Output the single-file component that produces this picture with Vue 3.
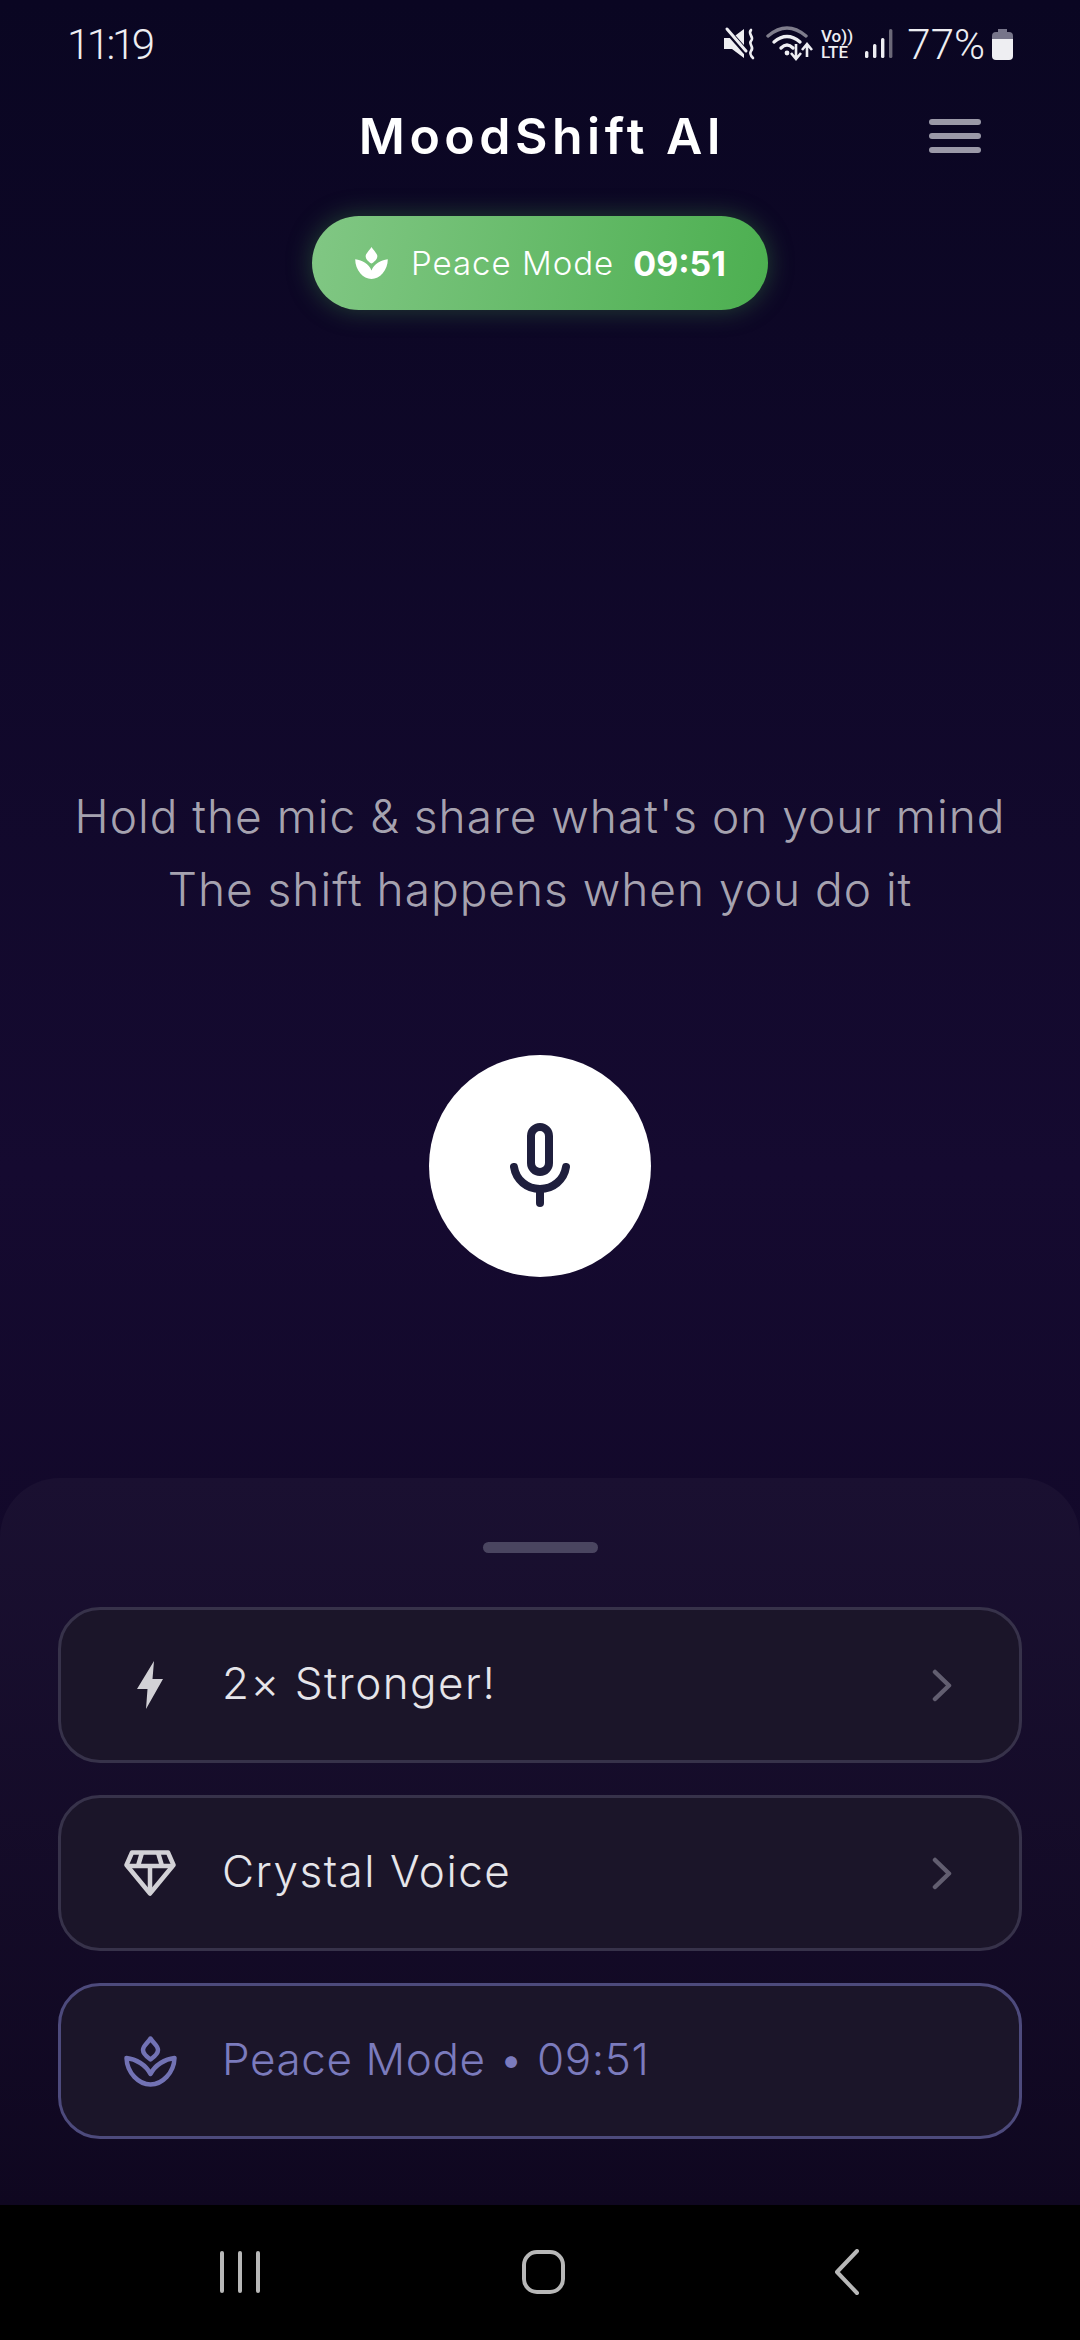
<template>
  <div class="screen">
    <div class="status-bar">
      <span class="clock">11:19</span>
      <div class="status-right">
        <svg class="status-icons" width="170" height="36" viewBox="0 0 170 36">
          <path d="M0 12H8L20 3V32L8 23H0Z" fill="#eeeef2" />
          <path d="M1 2L23 27" stroke="#0b0724" stroke-width="6" />
          <path d="M3 3L22 25" stroke="#eeeef2" stroke-width="3" stroke-linecap="round" />
          <path d="M27 4C23 8 31 11 27 15C24 18 31 21 27 25C25 28 27 30 29 32" fill="none" stroke="#eeeef2" stroke-width="2.6" stroke-linecap="round" />
          <path d="M44 10Q63 -6 82 10" fill="none" stroke="#7f7d8c" stroke-width="3.4" stroke-linecap="round" />
          <path d="M50 16Q63 5 76 16" fill="none" stroke="#eeeef2" stroke-width="3.4" stroke-linecap="round" />
          <path d="M57 22Q63 16 69 22" fill="none" stroke="#eeeef2" stroke-width="3.4" stroke-linecap="round" />
          <circle cx="63" cy="27" r="2.4" fill="#eeeef2" />
          <path d="M72 18V32M67 27L72 33L77 27" fill="none" stroke="#eeeef2" stroke-width="2.6" />
          <path d="M83 31V19M78 24L83 18L88 24" fill="none" stroke="#eeeef2" stroke-width="2.6" />
          <text x="97" y="16" class="net-text">Vo))</text>
          <text x="97" y="32" class="net-text">LTE</text>
          <rect x="141" y="25" width="3.4" height="7" rx="1.5" fill="#eeeef2" />
          <rect x="149" y="18" width="3.4" height="14" rx="1.5" fill="#eeeef2" />
          <rect x="157" y="12" width="3.4" height="20" rx="1.5" fill="#eeeef2" />
          <rect x="165" y="3" width="3.4" height="29" rx="1.5" fill="#6b6878" />
        </svg>
        <span class="battery-pct">77%</span>
        <svg class="battery" width="21" height="31" viewBox="0 0 21 31">
          <path d="M6 0H15V3H17Q21 3 21 7V10H0V7Q0 3 4 3H6Z" fill="#77758a" />
          <path d="M0 10H21V27Q21 31 17 31H4Q0 31 0 27Z" fill="#eeeef2" />
        </svg>
      </div>
    </div>

    <header class="top-bar">
      <span></span>
      <h1 class="title">MoodShift AI</h1>
      <div class="menu-btn">
        <i></i><i></i><i></i>
      </div>
    </header>

    <div class="pill-row">
      <div class="mode-pill">
        <svg width="33" height="32" viewBox="0 0 53 52" fill="#fff">
          <path d="M26.5 0C21 8 17 11 17 15C17 20 22 24 26.5 27C31 24 36 20 36 15C36 11 32 8 26.5 0Z" />
          <path d="M0 20C12 21 22 28 26.5 38C31 28 41 21 53 20C53 38 40 52 26.5 52C13 52 0 38 0 20Z" />
        </svg>
        <span class="pill-label">Peace Mode</span>
        <span class="pill-time">09:51</span>
      </div>
    </div>

    <main class="main">
      <p class="prompt">Hold the mic &amp; share what's on your mind<br />The shift happens when you do it</p>
      <div class="mic-btn">
        <svg width="66" height="90" viewBox="0 0 66 90" fill="none" stroke="#1f1f3d" stroke-width="8" stroke-linecap="round">
          <rect x="24" y="6" width="18" height="45" rx="9" />
          <path d="M7 46C9 59 20 68 33 68C46 68 57 59 59 46" />
          <path d="M33 68V82" />
        </svg>
      </div>
    </main>

    <section class="sheet">
      <div class="handle"></div>
      <div class="options">
        <div v-for="opt in options" :key="opt.label" class="option" :class="{ active: opt.active }">
          <div class="option-icon">
            <svg v-if="opt.icon === 'bolt'" width="26" height="48" viewBox="0 0 26 48" fill="#d2d1d6">
              <path d="M17 0L15.5 18H26L9 48L10.5 28H0Z" />
            </svg>
            <svg v-else-if="opt.icon === 'gem'" width="52" height="47" viewBox="0 0 52 47" fill="none" stroke="#d2d1d6" stroke-width="4.5" stroke-linejoin="round">
              <path d="M8 2.5H44L49.5 15L26 43.5L2.5 15Z" />
              <path d="M2.5 16H49.5M26 16V42M18 2.5L14 16M34 2.5L38 16" />
            </svg>
            <svg v-else width="53" height="52" viewBox="0 0 53 52" fill="none" stroke="#7272b4" stroke-width="4.5" stroke-linejoin="round">
              <path d="M26.5 3.5C23 9 19 11 19 15C19 19 23 22 26.5 24.5C30 22 34 19 34 15C34 11 30 9 26.5 3.5Z" />
              <path d="M2.5 23C12 24 22 30 26.5 39C31 30 41 24 50.5 23C50 38 38 49.5 26.5 49.5C15 49.5 3 38 2.5 23Z" />
            </svg>
          </div>
          <span class="option-label">{{ opt.label }}</span>
          <svg v-if="!opt.active" class="chevron" width="20" height="33" viewBox="0 0 20 33" fill="none" stroke="#625e70" stroke-width="4.5" stroke-linecap="round" stroke-linejoin="round">
            <path d="M3 3L17 16.5L3 30" />
          </svg>
        </div>
      </div>
    </section>

    <nav class="nav-bar">
      <div class="nav-cell">
        <div class="recents"><i></i><i></i><i></i></div>
      </div>
      <div class="nav-cell"><div class="home"></div></div>
      <div class="nav-cell">
        <svg width="25" height="46" viewBox="0 0 25 46" fill="none" stroke="#b8b8b8" stroke-width="4" stroke-linecap="round" stroke-linejoin="round">
          <path d="M23 2L3 23L23 44" />
        </svg>
      </div>
    </nav>
  </div>
</template>

<script setup>
const options = [
  { label: '2× Stronger!', icon: 'bolt' },
  { label: 'Crystal Voice', icon: 'gem' },
  { label: 'Peace Mode • 09:51', icon: 'lotus', active: true }
]
</script>

<style>
html,
body {
  margin: 0;
  background: #000;
}
</style>

<style scoped>
.screen {
  width: 1080px;
  height: 2340px;
  display: flex;
  flex-direction: column;
  overflow: hidden;
  font-family: Inter, "Liberation Sans", sans-serif;
  color: #fff;
  background: linear-gradient(180deg, #0a0622 0%, #150a30 50%, #0e0620 93%);
}

.status-bar {
  height: 72px;
  flex: none;
  display: flex;
  justify-content: space-between;
  align-items: center;
  padding: 16px 67px 0 67px;
  box-sizing: border-box;
  font-family: Roboto, sans-serif;
  font-weight: 300;
  font-size: 42px;
  color: #eeeef2;
}

.clock {
  letter-spacing: -3.5px;
}

.status-right {
  display: flex;
  align-items: center;
}

.status-icons {
  margin-right: 13px;
}

.net-text {
  font-family: Roboto, sans-serif;
  font-size: 17px;
  font-weight: 500;
  fill: #eeeef2;
}

.battery-pct {
  margin-right: 7px;
}

.top-bar {
  height: 128px;
  flex: none;
  display: grid;
  grid-template-columns: 1fr auto 1fr;
  align-items: center;
}

.title {
  margin: 0;
  padding-left: 4px;
  font-size: 50px;
  font-weight: 600;
  letter-spacing: 4.5px;
  color: #fff;
}

.menu-btn {
  justify-self: end;
  margin-right: 99px;
  width: 52px;
  display: flex;
  flex-direction: column;
  gap: 8px;
}

.menu-btn i {
  display: block;
  height: 6px;
  border-radius: 3px;
  background: #9b99a8;
}

.pill-row {
  flex: none;
  display: flex;
  justify-content: center;
  margin-top: 16px;
}

.mode-pill {
  width: 456px;
  height: 94px;
  box-sizing: border-box;
  padding-left: 43px;
  display: flex;
  align-items: center;
  border-radius: 47px;
  background: linear-gradient(100deg, #81c784 0%, #4caf50 100%);
  box-shadow: 0 0 26px rgba(76, 175, 80, 0.35);
}

.pill-label {
  margin-left: 23px;
  font-size: 33px;
  font-weight: 300;
  letter-spacing: 1px;
}

.pill-time {
  margin-left: 19px;
  font-size: 34px;
  font-weight: 700;
}

.main {
  flex: 1;
  display: flex;
  flex-direction: column;
  align-items: center;
  padding-top: 470px;
  min-height: 0;
}

.prompt {
  margin: 0;
  font-size: 46px;
  line-height: 73px;
  font-weight: 300;
  letter-spacing: 1px;
  text-align: center;
  color: rgba(255, 255, 255, 0.65);
}

.mic-btn {
  margin-top: 129px;
  width: 222px;
  height: 222px;
  flex: none;
  display: flex;
  align-items: center;
  justify-content: center;
  border-radius: 50%;
  background: #fff;
}

.sheet {
  height: 727px;
  flex: none;
  box-sizing: border-box;
  padding: 64px 58px 0;
  border-radius: 60px 60px 0 0;
  background: linear-gradient(180deg, #1a1031 0%, #0f0720 100%);
}

.handle {
  width: 115px;
  height: 11px;
  margin: 0 auto 54px;
  border-radius: 6px;
  background: #4a4560;
}

.options {
  display: flex;
  flex-direction: column;
  gap: 32px;
}

.option {
  height: 156px;
  box-sizing: border-box;
  display: flex;
  align-items: center;
  padding: 0 67px 0 61px;
  border: 3px solid #37324a;
  border-radius: 42px;
  background: #1b1529;
}

.option.active {
  border-color: #4d4a7c;
}

.option-icon {
  width: 56px;
  display: flex;
  justify-content: center;
}

.option-label {
  flex: 1;
  margin-left: 44px;
  padding-bottom: 5px;
  font-size: 44px;
  font-weight: 300;
  letter-spacing: 1.5px;
  color: #e6e5ea;
}

.active .option-label {
  letter-spacing: 0.6px;
  color: #7b7bbd;
}

.chevron {
  flex: none;
}

.nav-bar {
  height: 135px;
  flex: none;
  display: grid;
  grid-template-columns: repeat(3, 303px);
  justify-content: center;
  padding-left: 6px;
  background: #000;
}

.nav-cell {
  display: flex;
  align-items: center;
  justify-content: center;
  padding-bottom: 2px;
}

.recents {
  display: flex;
  gap: 14px;
}

.recents i {
  display: block;
  width: 4px;
  height: 42px;
  border-radius: 2px;
  background: #b8b8b8;
}

.home {
  width: 43px;
  height: 44px;
  box-sizing: border-box;
  border: 4px solid #b8b8b8;
  border-radius: 15px;
}
</style>
